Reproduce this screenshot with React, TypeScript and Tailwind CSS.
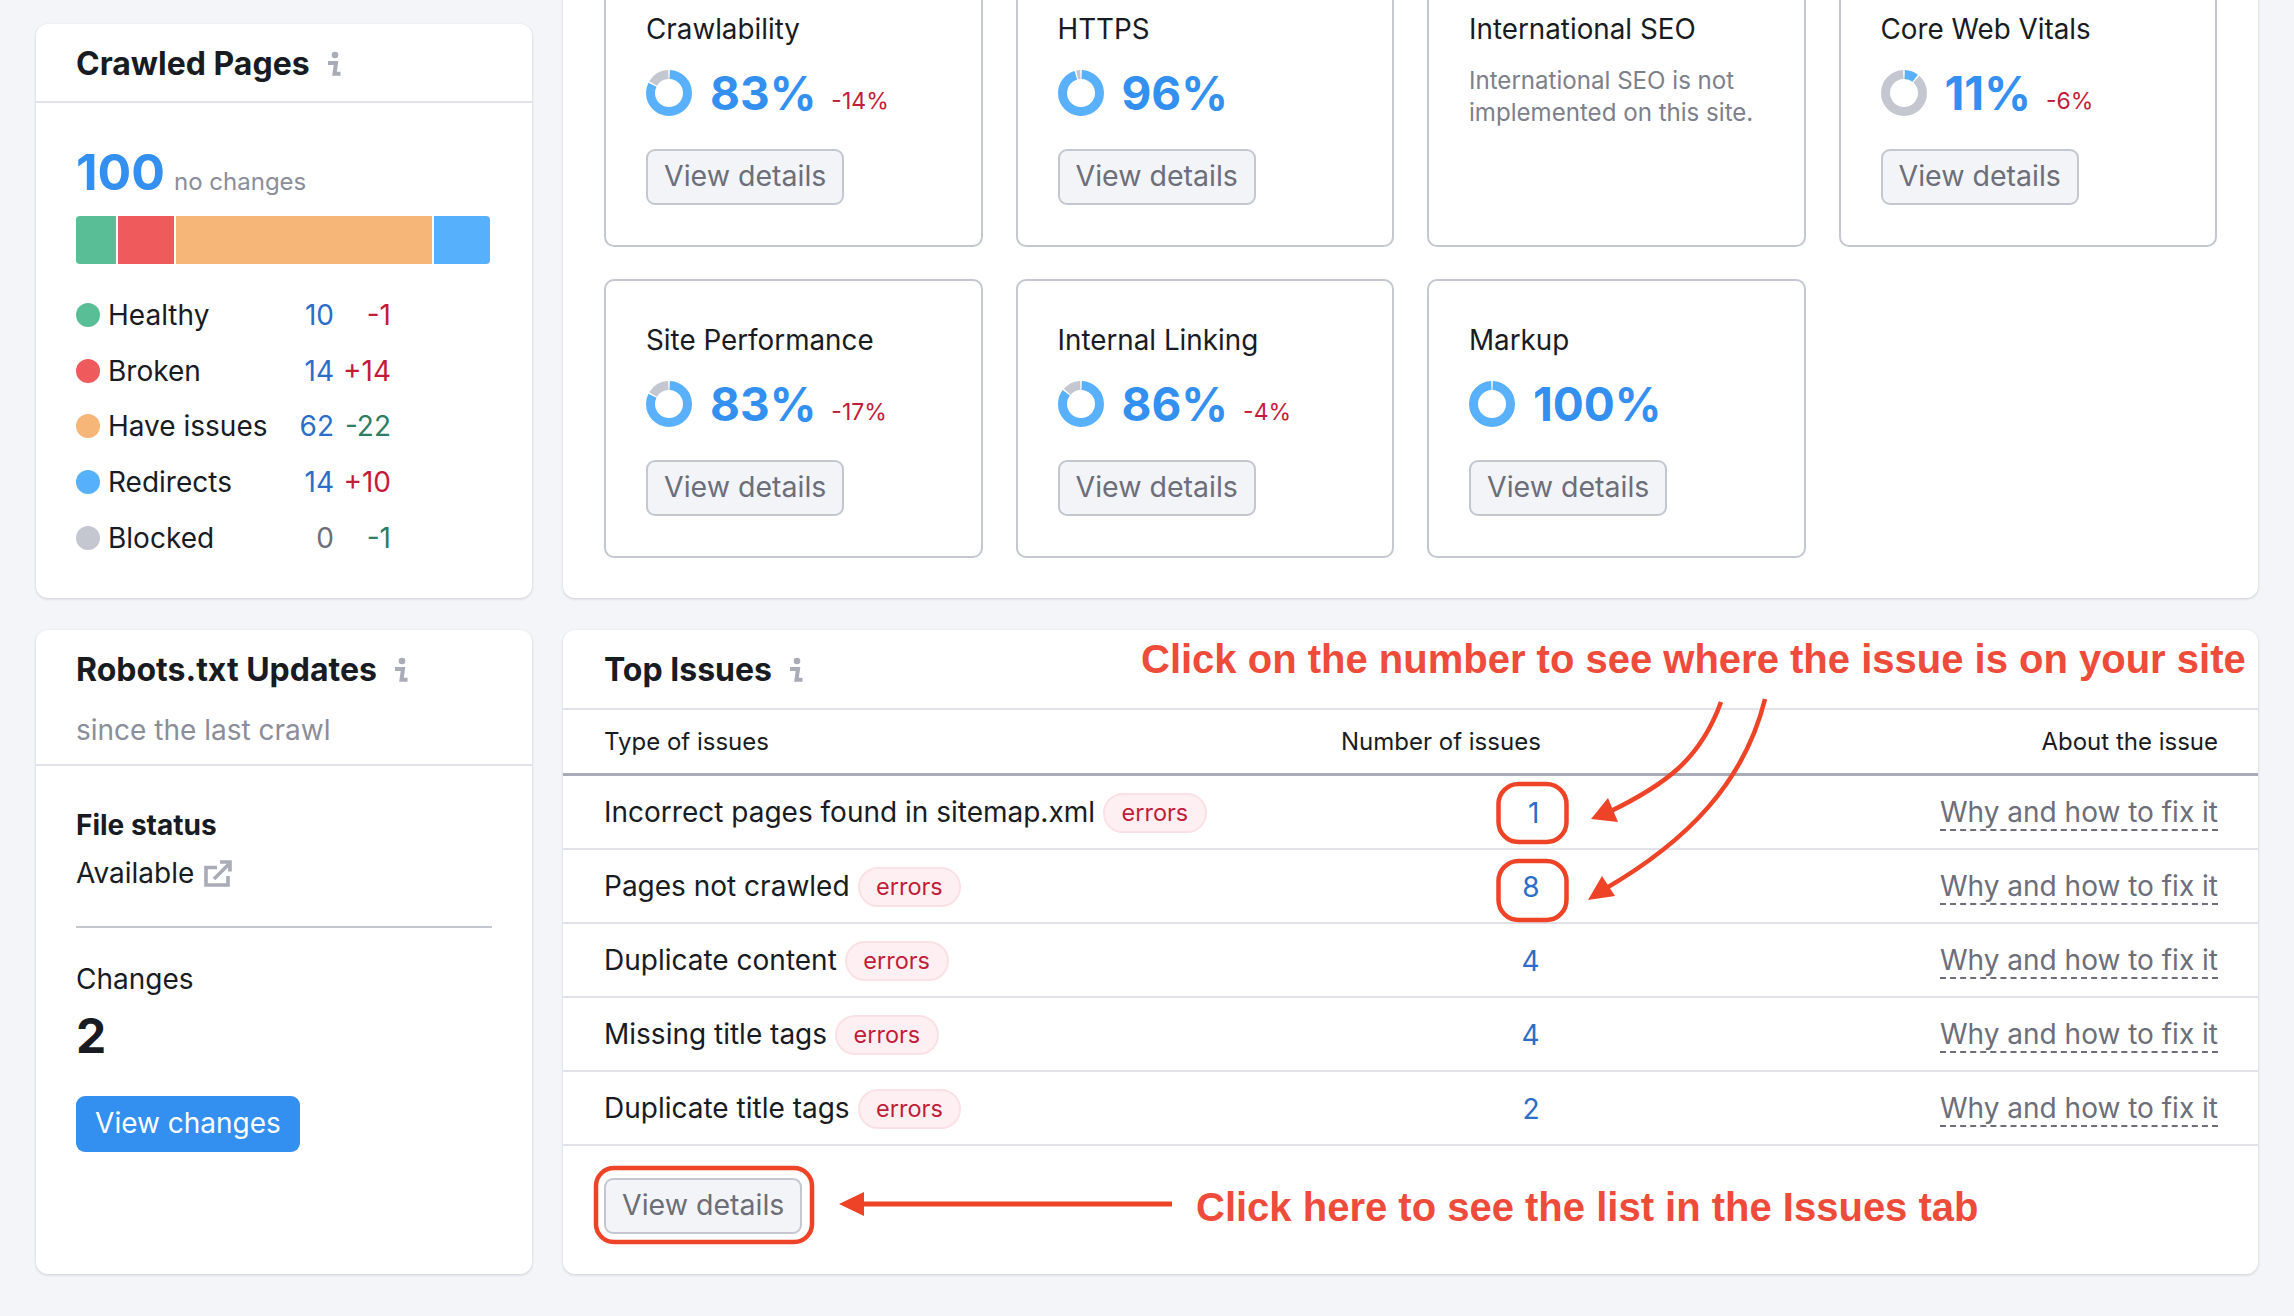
import React from "react";

const Info = () => (
  <svg width="14" height="26" viewBox="0 0 14 26" className="shrink-0">
    <circle cx="8" cy="4" r="3.3" fill="#a9abb6" />
    <path d="M1 12H9L7.5 22.8H13.5" fill="none" stroke="#a9abb6" strokeWidth="4" />
  </svg>
);

const Donut = ({ pct }: { pct: number }) => {
  const gap = 1.2;
  return (
    <svg width="46" height="46" viewBox="0 0 46 46" className="shrink-0 -rotate-90">
      <circle cx="23" cy="23" r="18.5" fill="none" stroke="#c4c7cf" strokeWidth="9" pathLength={100}
        strokeDasharray={`${Math.max(100 - pct - gap, 0)} 100`} strokeDashoffset={-(pct + gap / 2)} />
      <circle cx="23" cy="23" r="18.5" fill="none" stroke="#59b0fd" strokeWidth="9" pathLength={100}
        strokeDasharray={`${pct - gap} 100`} strokeDashoffset={-gap / 2} />
    </svg>
  );
};

const GrayButton = ({ className = "" }: { className?: string }) => (
  <button className={`h-[56px] px-[16px] pb-[1px] rounded-[9px] border-2 border-[#c4c7cf] bg-[#f3f4f8] text-[#6c6e79] text-[28.5px] leading-none ${className}`}>
    View details
  </button>
);

const Metric = ({ title, pct, label, delta, note }: { title: string; pct?: number; label?: string; delta?: string; note?: boolean }) => (
  <div className="h-[279px] rounded-[10px] border-2 border-[#c4c7cf] bg-white pl-[40px] pt-[41px] flex flex-col items-start">
    <div className="h-[36px] leading-[36px] text-[27.8px] text-[#191b23]">{title}</div>
    {note ? (
      <p className="mt-[18px] text-[24.1px] leading-[32px] text-[#7d7f8a]">
        International SEO is not
        <br />
        implemented on this site.
      </p>
    ) : (
      <>
        <div className="mt-[23px] h-[46px] flex items-center">
          <Donut pct={pct as number} />
          <span className="ml-[18px] -mt-[1px] text-[46px] leading-none font-bold text-[#338ff0]">{label}</span>
          {delta && <span className="ml-[15px] mt-[17px] text-[23px] leading-none text-[#c21c3a]">{delta}</span>}
        </div>
        <GrayButton className="mt-[33px]" />
      </>
    )}
  </div>
);

const legend = [
  { name: "Healthy", color: "bg-[#59bd96]", n: "10", d: "-1", dc: "text-[#c21c3a]", nc: "text-[#2b6dc7]" },
  { name: "Broken", color: "bg-[#ef5a5c]", n: "14", d: "+14", dc: "text-[#c21c3a]", nc: "text-[#2b6dc7]" },
  { name: "Have issues", color: "bg-[#f5b678]", n: "62", d: "-22", dc: "text-[#2e7d62]", nc: "text-[#2b6dc7]" },
  { name: "Redirects", color: "bg-[#56b0fc]", n: "14", d: "+10", dc: "text-[#c21c3a]", nc: "text-[#2b6dc7]" },
  { name: "Blocked", color: "bg-[#c4c7cf]", n: "0", d: "-1", dc: "text-[#2e7d62]", nc: "text-[#6c6e79]" },
];

const issues = [
  { name: "Incorrect pages found in sitemap.xml", n: "1" },
  { name: "Pages not crawled", n: "8" },
  { name: "Duplicate content", n: "4" },
  { name: "Missing title tags", n: "4" },
  { name: "Duplicate title tags", n: "2" },
];

export default function App() {
  return (
    <div className="relative w-[2294px] h-[1316px] overflow-hidden bg-[#f4f5f9] font-['Inter',sans-serif] text-[#191b23]">
      <div className="grid grid-cols-[496px_1695px] grid-rows-[574px_644px] gap-x-[31px] gap-y-[32px] pl-[36px] pt-[24px]">
        {/* Crawled pages */}
        <section className="bg-white rounded-[12px] shadow-[0_1px_3px_rgba(25,27,35,0.18)]">
          <header className="h-[79px] pt-[2px] border-b-2 border-[#e0e1e9] pl-[40px] flex items-center gap-[17px]">
            <h2 className="text-[32px] font-bold leading-none">Crawled Pages</h2>
            <Info />
          </header>
          <div className="pl-[40px] pr-[42px]">
            <div className="mt-[44px] flex items-baseline h-[48px]">
              <span className="text-[50px] font-bold leading-none text-[#338ff0]">100</span>
              <span className="ml-[9px] text-[24px] leading-none text-[#8b8d98]">no changes</span>
            </div>
            <div className="mt-[21px] h-[48px] flex gap-[2px] rounded-[4px] overflow-hidden">
              <div className="w-[40px] bg-[#59bd96]" />
              <div className="w-[56px] bg-[#ef5a5c]" />
              <div className="w-[256px] bg-[#f5b678]" />
              <div className="w-[56px] bg-[#56b0fc]" />
            </div>
            <div className="mt-[23px] flex flex-col">
              {legend.map((l) => (
                <div key={l.name} className="h-[55.7px] grid grid-cols-[24px_158px_76px_57px] items-center text-[28px] leading-none">
                  <span className={`w-[24px] h-[24px] rounded-full ${l.color}`} />
                  <span className="ml-[8px] whitespace-nowrap">{l.name}</span>
                  <span className={`text-right ${l.nc}`}>{l.n}</span>
                  <span className={`text-right ${l.dc}`}>{l.d}</span>
                </div>
              ))}
            </div>
          </div>
        </section>

        {/* Metrics */}
        <section className="-mt-[96px] bg-white rounded-[12px] shadow-[0_1px_3px_rgba(25,27,35,0.18)] pl-[41px] pr-[41px] pt-[40px]">
          <div className="grid grid-cols-4 gap-x-[33px] gap-y-[32px]">
            <Metric title="Crawlability" pct={83} label="83%" delta="-14%" />
            <Metric title="HTTPS" pct={96} label="96%" />
            <Metric title="International SEO" note />
            <Metric title="Core Web Vitals" pct={11} label="11%" delta="-6%" />
            <Metric title="Site Performance" pct={83} label="83%" delta="-17%" />
            <Metric title="Internal Linking" pct={86} label="86%" delta="-4%" />
            <Metric title="Markup" pct={100} label="100%" />
          </div>
        </section>

        {/* Robots */}
        <section className="bg-white rounded-[12px] shadow-[0_1px_3px_rgba(25,27,35,0.18)] pl-[40px]">
          <div className="-ml-[40px] pl-[40px] h-[136px] border-b-2 border-[#e0e1e9] pt-[23px]">
            <div className="flex items-center gap-[17px] h-[34px]">
              <h2 className="text-[32px] font-bold leading-none">Robots.txt Updates</h2>
              <Info />
            </div>
            <p className="mt-[23px] text-[28px] leading-[40px] text-[#8b8d98]">since the last crawl</p>
          </div>
          <p className="mt-[42px] text-[28px] leading-[34px] font-bold">File status</p>
          <div className="mt-[14px] h-[34px] flex items-center gap-[10px] text-[28px]">
            <span>Available</span>
            <svg width="28" height="28" viewBox="0 0 28 28" fill="none" stroke="#a9abb6" strokeWidth="3.6">
              <path d="M13 8.5H2V26H24V17" />
              <path d="M10 20L25 5M16 3H26V12.5" />
            </svg>
          </div>
          <div className="mt-[36px] mr-[40px] h-[2px] bg-[#c4c7cf]" />
          <p className="mt-[34px] text-[28px] leading-[34px]">Changes</p>
          <p className="mt-[16px] text-[48px] leading-[48px] font-bold">2</p>
          <button className="mt-[36px] h-[56px] w-[224px] pb-[2px] rounded-[9px] bg-[#338ff0] text-white text-[28px] leading-none">View changes</button>
        </section>

        {/* Top issues */}
        <section className="bg-white rounded-[12px] shadow-[0_1px_3px_rgba(25,27,35,0.18)]">
          <header className="h-[80px] pt-[2px] border-b-2 border-[#e0e1e9] pl-[41px] flex items-center gap-[17px]">
            <h2 className="text-[32px] font-bold leading-none">Top Issues</h2>
            <Info />
          </header>
          <div className="h-[66px] border-b-[3px] border-[#a9abb6] pl-[41px] pr-[40px] grid grid-cols-[737px_197px_1fr] items-center text-[24px]">
            <span>Type of issues</span>
            <span className="text-right whitespace-nowrap">Number of issues</span>
            <span className="text-right">About the issue</span>
          </div>
          {issues.map((r) => (
            <div key={r.name} className="h-[74px] border-b-2 border-[#e0e1e9] pl-[41px] pr-[40px] grid grid-cols-[737px_197px_1fr] items-center text-[28px]">
              <div className="flex items-center gap-[8px] whitespace-nowrap">
                <span>{r.name}</span>
                <span className="mt-[2px] h-[40px] px-[16.5px] flex items-center rounded-full border-2 border-[#fbe1e5] bg-[#fef0f2] text-[23.5px] text-[#c21c3a]">errors</span>
              </div>
              <a className="text-right -mr-[1.5px] mt-[1px] text-[#2b6dc7]">{r.n}</a>
              <div className="text-right">
                <a className="text-[#6c6e79] border-b-2 border-dashed border-[#6c6e79] leading-[34px] inline-block">Why and how to fix it</a>
              </div>
            </div>
          ))}
          <div className="pl-[41px] pt-[32px]">
            <GrayButton />
          </div>
        </section>
      </div>

      {/* Annotations */}
      <svg className="absolute inset-0 pointer-events-none" width="2294" height="1316" viewBox="0 0 2294 1316" fill="none">
        <rect x="1498.5" y="784" width="68" height="58" rx="20" stroke="#ee4327" strokeWidth="4.5" />
        <rect x="1498.5" y="861" width="68" height="59" rx="20" stroke="#ee4327" strokeWidth="4.5" />
        <rect x="596" y="1168" width="216" height="74" rx="18" stroke="#ee4327" strokeWidth="4.5" />
        <path d="M1721 702C1700 760 1665 785 1607 813" stroke="#ee4327" strokeWidth="4.5" />
        <path d="M1591 819L1608 798L1618 822Z" fill="#ee4327" />
        <path d="M1765 699C1745 780 1690 840 1603 890" stroke="#ee4327" strokeWidth="4.5" />
        <path d="M1588 900L1602 876L1615 896Z" fill="#ee4327" />
        <path d="M1172 1204H860" stroke="#ee4327" strokeWidth="5" />
        <path d="M839 1204L864 1192V1216Z" fill="#ee4327" />
      </svg>
      <span className="absolute left-[1141px] top-[636px] text-[40px] leading-[46px] font-bold font-['Liberation_Sans',sans-serif] text-[#ee4b3a] whitespace-nowrap">
        Click on the number to see where the issue is on your site
      </span>
      <span className="absolute left-[1196px] top-[1184px] text-[40px] leading-[46px] font-bold font-['Liberation_Sans',sans-serif] text-[#ee4b3a] whitespace-nowrap">
        Click here to see the list in the Issues tab
      </span>
    </div>
  );
}
